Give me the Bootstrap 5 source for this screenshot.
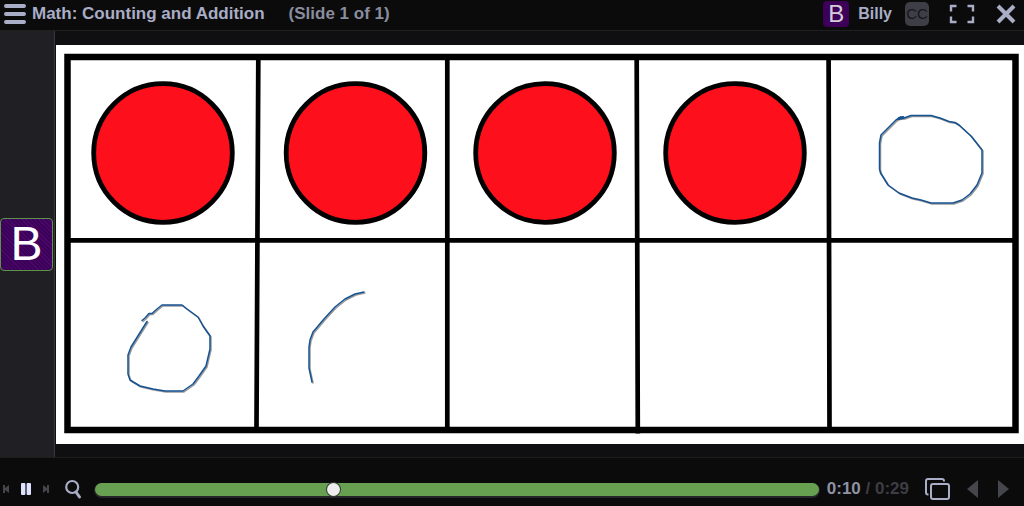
<!DOCTYPE html>
<html lang="en">
<head>
<meta charset="utf-8">
<meta name="viewport" content="width=device-width, initial-scale=1">
<title>Math: Counting and Addition</title>
<link rel="stylesheet" href="https://cdn.jsdelivr.net/npm/bootstrap@5.3.0/dist/css/bootstrap.min.css">
<style>
  body { background: #0b0b0b; color: #a9adc6; font-family: "Liberation Sans", Arial, sans-serif; font-size: 17px; line-height: 20px; font-weight: 700; }
  h1 { font-size: 17px; line-height: 20px; }
  svg { display: block; }
  .tool { background: none; border: 0; padding: 0; color: inherit; line-height: 1; }
  .topbar { height: 31px; padding: 0 8px 3px 4px; border-bottom: 1px solid #202021; }
  .topbar h1 { margin-left: 6px; }
  .slide-no { margin-left: 24px; color: #8a8d9e; }
  .user { font-size: 16px; margin-left: 9px; }
  .initial { background: #3d0058; color: #d5ccd9; font-weight: 400; border-radius: 4px; }
  .initial-sm { width: 26px; height: 26px; font-size: 24px; }
  .initial-lg { width: 53px; height: 53px; font-size: 48px; color: #fff; border: 1px solid #5b9447;
    background: repeating-linear-gradient(45deg, #3b0059 0 2px, #4b0869 2px 3px); }
  .cc { width: 24px; height: 24px; border-radius: 5px; background: #3e3e46; color: #17171a; font-size: 15px; font-weight: 400; margin: 0 20px 0 13px; }
  .close-tool { margin-left: 21px; }
  .people { width: 55px; background: #202024; border-right: 1px solid #38383e; }
  .stage { background: #0f0f11; padding-left: 1px; }
  .player { padding: 19px 15px 5px 3px; border-top: 1px solid #1d1d1e; }
  .steps { gap: 12px; width: 47px; }
  .dim { color: #45454c; }
  .zoom { margin: 0 13px 0 15px; }
  .scrub { appearance: none; -webkit-appearance: none; height: 14px; min-width: 0; margin: 0; background: none; }
  .scrub::-webkit-slider-runnable-track { height: 13px; border-radius: 7px; background: #67a050; box-shadow: 0 1px 0 1px #25252a; }
  .scrub::-webkit-slider-thumb { -webkit-appearance: none; width: 13px; height: 13px; border-radius: 50%; background: #ededed; box-shadow: 0 0 0 1px #343b31; }
  .scrub::-moz-range-track { height: 13px; border-radius: 7px; background: #67a050; }
  .time { margin: 0 16px 0 8px; color: #8f92a3; }
  .total { color: #3d3d43; }
  .forward { margin-left: 20px; }
</style>
</head>
<body class="d-flex flex-column vh-100 overflow-hidden">
<header class="topbar d-flex align-items-center flex-shrink-0">
  <button class="tool" type="button" aria-label="Menu">
    <svg width="22" height="22" viewBox="0 0 22 22" stroke="currentColor" stroke-width="4" stroke-linecap="round"><path d="M2 3H20M2 11H20M2 19H20"/></svg>
  </button>
  <h1 class="fw-bold mb-0">Math: Counting and Addition</h1>
  <span class="slide-no">(Slide 1 of 1)</span>
  <span class="initial initial-sm d-flex align-items-center justify-content-center ms-auto">B</span>
  <span class="user">Billy</span>
  <button class="tool cc" type="button" aria-label="Closed captions">CC</button>
  <button class="tool" type="button" aria-label="Full screen">
    <svg width="26" height="20" viewBox="0 0 26 20" fill="none" stroke="currentColor" stroke-width="2.400"><path d="M7.500 2H2V7.500M18.500 2H24V7.500M7.500 18H2V12.500M18.500 18H24V12.500"/></svg>
  </button>
  <button class="tool close-tool" type="button" aria-label="Close">
    <svg width="20" height="20" viewBox="0 0 20 20" stroke="currentColor" stroke-width="4"><path d="M2 2L18 18M18 2L2 18"/></svg>
  </button>
</header>

<main class="d-flex flex-fill overflow-hidden">
  <aside class="people d-flex align-items-center flex-shrink-0">
    <span class="initial initial-lg d-flex align-items-center justify-content-center">B</span>
  </aside>
  <section class="stage d-flex flex-column justify-content-center flex-fill">
    <svg class="w-100 bg-white" viewBox="56 45 968 399" role="img" aria-label="Ten frame with four red counters">
      <g fill="none" stroke="#000">
        <rect x="67.500" y="57" width="948" height="373" stroke-width="6.500"/>
        <path stroke-width="4.700" d="M70 240.300H1013M258.300 60L256.500 428M447.300 60V428M636.700 60L637.800 433.500M828.600 60L829.500 428"/>
      </g>
      <g fill="#fd0f1b" stroke="#000" stroke-width="4.800">
        <circle cx="163" cy="153" r="69.300"/>
        <circle cx="355.500" cy="153" r="69.300"/>
        <circle cx="545" cy="153" r="69.300"/>
        <circle cx="735" cy="153" r="69.300"/>
      </g>
      <defs>
        <g id="strokes" fill="none" stroke-linejoin="round" stroke-linecap="round">
          <path d="M899 118.500L904 118L911 115.500H931L940 118L949 121.500L955 122.500L959 125L971 136L982 150V173L977 185L970 194L962 200L953 203H931L921 200L912 198L899 193L888 185L880.500 173L879.500 169V143L881 135L896 120L901 117"/>
          <path d="M142 320.500L145 318L149 313.500H152L157 309L162 305H182L187 309L198 317L203 326L210 336V349L206 366L199 376L193 384L183 391H165L153 389L140 386L130 380L128 374V355L131 347L147 321.500"/>
          <path d="M364 292L355 294L345 299L335 307L324 319L313 332L310 340L309 347V368L312 382"/>
        </g>
      </defs>
      <use href="#strokes" x="1" y="1" stroke="#999" stroke-width="1.500"/>
      <use href="#strokes" stroke="#155291" stroke-width="1.500"/>
      <path d="M899 118.500L903 117.500" stroke="#155291" stroke-width="3" stroke-linecap="round"/>
    </svg>
  </section>
</main>

<footer class="player flex-shrink-0">
  <div class="d-flex align-items-center">
    <div class="steps d-flex align-items-center flex-shrink-0">
      <button class="tool dim" type="button" aria-label="Previous"><svg width="6" height="8" viewBox="0 0 6 8" fill="currentColor"><path d="M0 0H2V3L6 0V8L2 5V8H0Z"/></svg></button>
      <button class="tool" type="button" aria-label="Pause"><svg width="10" height="12" viewBox="0 0 10 12" fill="#dfe3ff"><rect width="4.400" height="12" rx="1"/><rect x="5.600" width="4.400" height="12" rx="1"/></svg></button>
      <button class="tool dim" type="button" aria-label="Next"><svg width="6" height="8" viewBox="0 0 6 8" fill="currentColor"><path d="M0 0L4 3V0H6V8H4V5L0 8Z"/></svg></button>
    </div>
    <button class="tool zoom" type="button" aria-label="Search">
      <svg width="17" height="20" viewBox="0 0 17 20" fill="none" stroke="currentColor"><circle cx="7.200" cy="8" r="6" stroke-width="2.200"/><path d="M11 13L14.500 18" stroke-width="3" stroke-linecap="round"/></svg>
    </button>
    <input class="scrub flex-fill" type="range" min="0" max="29" step="any" value="9.47" aria-label="Playback position">
    <div class="time text-nowrap">0:10 <span class="total">/ 0:29</span></div>
    <button class="tool" type="button" aria-label="Slides">
      <svg width="26" height="24" viewBox="0 0 26 24" fill="none" stroke="currentColor" stroke-width="2"><rect x="6" y="7" width="18" height="15" rx="2"/><path d="M3.500 17.500H3Q1 17.500 1 15.500V4Q1 2 3 2H17Q19 2 19 4V4.500"/></svg>
    </button>
    <button class="tool dim ms-3" type="button" aria-label="Previous slide"><svg width="11" height="18" viewBox="0 0 11 18" fill="currentColor"><path d="M0 9L11 0V18Z"/></svg></button>
    <button class="tool dim forward" type="button" aria-label="Next slide"><svg width="11" height="18" viewBox="0 0 11 18" fill="currentColor"><path d="M11 9L0 0V18Z"/></svg></button>
  </div>
</footer>
<script src="https://cdn.jsdelivr.net/npm/bootstrap@5.3.0/dist/js/bootstrap.bundle.min.js"></script>
</body>
</html>
